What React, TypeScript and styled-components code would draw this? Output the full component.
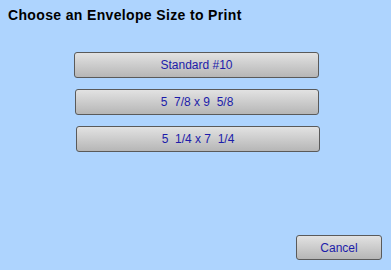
import React from "react";
import styled, { createGlobalStyle } from "styled-components";

const Global = createGlobalStyle`
  html, body { margin: 0; padding: 0; background: #aed4fe; }
  body { font-family: "Liberation Sans", Arial, sans-serif; }
`;

const Page = styled.div`
  width: 391px;
  height: 270px;
  box-sizing: border-box;
  background: #aed4fe;
  display: flex;
  flex-direction: column;
  padding: 7px 9px 10px 8px;
`;

const Title = styled.h1`
  margin: 0;
  font-size: 14px;
  font-weight: bold;
  letter-spacing: 0.35px;
  color: #000;
  line-height: 16px;
`;

const Options = styled.div`
  display: flex;
  flex-direction: column;
  gap: 11px;
  margin-top: 29px;
`;

const Button = styled.button<{ $offset?: number; $w?: number }>`
  box-sizing: border-box;
  width: ${(p) => p.$w ?? 245}px;
  height: 26px;
  margin-left: ${(p) => p.$offset ?? 0}px;
  border: 1px solid #5a5a5a;
  border-radius: 3px;
  background: linear-gradient(#e2e2e2, #b6b6b6);
  color: #1c1caa;
  font-family: "Liberation Sans", Arial, sans-serif;
  font-size: 12px;
  white-space: pre;
  padding: 0;
  cursor: pointer;
`;

const Footer = styled.div`
  margin-top: auto;
  display: flex;
  justify-content: flex-end;
`;

export default function App() {
  return (
    <>
      <Global />
      <Page>
        <Title>Choose an Envelope Size to Print</Title>
        <Options>
          <Button $offset={66}>Standard #10</Button>
          <Button $offset={67} $w={244}>{"5  7/8 x 9  5/8"}</Button>
          <Button $offset={68} $w={244}>{"5  1/4 x 7  1/4"}</Button>
        </Options>
        <Footer>
          <Button $w={86} $offset={0} style={{ height: 25 }}>Cancel</Button>
        </Footer>
      </Page>
    </>
  );
}
